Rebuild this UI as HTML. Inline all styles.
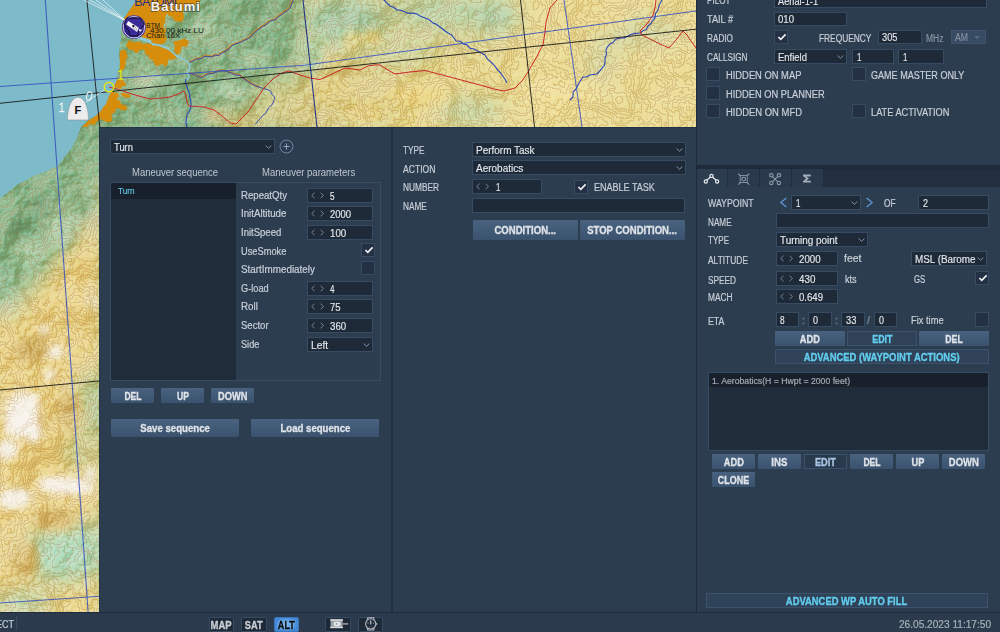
<!DOCTYPE html>
<html><head><meta charset="utf-8"><title>Mission Editor</title>
<style>
html,body{margin:0;padding:0;background:#2d3d50;}
body{width:1000px;height:632px;overflow:hidden;font-family:"Liberation Sans",sans-serif;}
#root{position:relative;width:1000px;height:632px;overflow:hidden;background:#2d3d50;}
#root div{position:absolute;box-sizing:border-box;white-space:nowrap;}
.f{display:inline-block;transform-origin:0 50%;}
.panel{background:#2d3d50;}
.t{font-size:10px;line-height:14px;color:#c8cfd7;-webkit-text-stroke:0.2px currentColor;}
.dim{color:#8793a1;}
.inp{background:#1f2a39;border:1px solid #374b62;}
.it{position:absolute;top:0.8px;bottom:-0.8px;font-size:10px;color:#e2e6ea;display:flex;align-items:center;-webkit-text-stroke:0.15px currentColor;}
.chev{position:absolute;right:2.5px;top:50%;margin-top:-1.6px;}
.spin{position:absolute;left:3px;top:50%;margin-top:-4px;}
.cb{background:#243144;border:1px solid #374b62;}
.ck{position:absolute;left:1.5px;top:2px;}
.btn{background:linear-gradient(#48627f,#3a526e);color:#dfe3e8;font-weight:bold;font-size:10px;text-align:center;border-radius:1px;}
.btn .f,.fbtn .f,.sb .f{transform-origin:50% 50%;-webkit-text-stroke:0.3px currentColor;}
.btn .f{position:relative;top:0.7px;}
.fbtn .f{position:relative;top:-0.2px;}
.fbtn{background:#2f4257;border:1px solid #3c536d;color:#62cdee;font-weight:bold;font-size:10px;text-align:center;}
.dark{background:#212c3a;}
.sel{background:#18202b;}
.sb{font-weight:bold;font-size:10px;text-align:center;line-height:13px;}
.sb .f{position:relative;top:0.9px;}
svg{display:block;}

</style></head>
<body>
<div id="root">
<svg id="map" style="position:absolute;left:0;top:0" width="697" height="613" viewBox="0 0 697 613">
<defs>
<filter id="b6" x="-30%" y="-30%" width="160%" height="160%"><feGaussianBlur stdDeviation="5"/></filter>
<filter id="b3" x="-30%" y="-30%" width="160%" height="160%"><feGaussianBlur stdDeviation="3"/></filter>
<filter id="b12" x="-30%" y="-30%" width="160%" height="160%"><feGaussianBlur stdDeviation="11"/></filter>
<filter id="hill" x="0" y="0" width="100%" height="100%" color-interpolation-filters="sRGB">
 <feTurbulence type="fractalNoise" baseFrequency="0.022" numOctaves="5" seed="8" result="n"/>
 <feDiffuseLighting in="n" surfaceScale="14" diffuseConstant="1.0" lighting-color="#ffffff"><feDistantLight azimuth="225" elevation="30"/></feDiffuseLighting>
</filter>
<filter id="cont" x="0" y="0" width="100%" height="100%" color-interpolation-filters="sRGB">
 <feTurbulence type="fractalNoise" baseFrequency="0.022" numOctaves="5" seed="8" result="n"/>
 <feColorMatrix in="n" type="matrix" values="0 0 0 0 0  0 0 0 0 0  0 0 0 0 0  0 0 0 1 0" result="a"/>
 <feComponentTransfer in="a" result="q"><feFuncA type="discrete" tableValues="0.0000 0.0667 0.1333 0.2000 0.2667 0.3333 0.4000 0.4667 0.5333 0.6000 0.6667 0.7333 0.8000 0.8667 0.9333 1.0000"/></feComponentTransfer>
 <feMorphology in="q" operator="dilate" radius="1" result="d"/>
 <feComposite in="d" in2="q" operator="arithmetic" k1="0" k2="1" k3="-1" k4="0" result="e"/>
 <feColorMatrix in="e" type="matrix" values="0 0 0 0 0.64  0 0 0 0 0.42  0 0 0 0 0.16  0 0 0 15 0" result="l"/>
 <feGaussianBlur in="l" stdDeviation="0.35"/>
</filter>
<linearGradient id="hg" x1="0" y1="0" x2="696" y2="0" gradientUnits="userSpaceOnUse"><stop offset="0" stop-color="#fff"/><stop offset="0.5" stop-color="#fff"/><stop offset="0.75" stop-color="#777"/><stop offset="1" stop-color="#666"/></linearGradient>
<mask id="hm" maskUnits="userSpaceOnUse" x="0" y="0" width="697" height="613"><rect x="0" y="0" width="697" height="613" fill="url(#hg)"/></mask>
<clipPath id="land"><path d="M137.0 0.0 L133.8 3.7 L131.0 8.0 L127.7 12.6 L124.0 18.0 L122.5 23.9 L121.0 30.0 L120.6 35.0 L121.0 40.0 L119.5 45.9 L119.0 52.0 L119.1 56.6 L120.0 62.0 L118.9 67.3 L118.0 72.0 L117.0 80.0 L113.0 88.0 L109.0 96.0 L106.0 104.0 L102.6 107.7 L100.0 112.0 L96.1 115.4 L92.0 118.0 L87.0 121.0 L81.0 127.0 L79.1 131.9 L77.5 136.5 L75.0 142.0 L71.9 147.3 L68.0 153.0 L64.3 157.0 L61.1 162.0 L58.0 166.0 L52.2 168.6 L47.0 171.0 L41.6 172.9 L36.0 175.0 L30.5 177.6 L25.0 181.0 L19.6 183.2 L15.0 186.0 L11.2 189.4 L7.0 193.0 L0.0 198.0 L0.0 613.0 L697.0 613.0 L697.0 0.0 Z"/></clipPath>
<clipPath id="vis"><path d="M0 0 H697 V127 H99 V613 H0 Z"/></clipPath>
</defs>
<g clip-path="url(#vis)">
<rect x="0" y="0" width="697" height="613" fill="#7dbbca"/>
<g clip-path="url(#land)">
<rect x="0" y="0" width="697" height="613" fill="#8cba90"/>
<g filter="url(#b12)">
<rect x="300" y="-30" width="450" height="200" fill="#dcd89c"/>
<rect x="390" y="50" width="370" height="120" fill="#e9dc96"/>
<rect x="500" y="-30" width="260" height="200" fill="#ecdf9c"/>
<ellipse cx="290" cy="105" rx="40" ry="30" fill="#d6d496"/>
<ellipse cx="238" cy="126" rx="22" ry="14" fill="#e6cf86"/>
<ellipse cx="350" cy="95" rx="45" ry="30" fill="#e2d692"/>
<ellipse cx="300" cy="118" rx="26" ry="14" fill="#dcd090"/>
<ellipse cx="345" cy="22" rx="40" ry="26" fill="#a9cfae"/>
<ellipse cx="440" cy="12" rx="50" ry="16" fill="#bcd8b0"/>
<ellipse cx="498" cy="16" rx="22" ry="16" fill="#b0d8bc"/>
<ellipse cx="470" cy="112" rx="34" ry="14" fill="#c8dab0"/>
<ellipse cx="405" cy="55" rx="30" ry="10" fill="#c9d8a8"/>
<ellipse cx="640" cy="32" rx="44" ry="14" fill="#d6dcae"/>
<ellipse cx="600" cy="62" rx="16" ry="22" fill="#d9dcaa"/>
<polygon points="110.0,180.0 110.0,640.0 -20.0,640.0 -20.0,300.0 30.0,290.0 60.0,250.0" fill="#ecd892"/>
<ellipse cx="4" cy="296" rx="18" ry="20" fill="#a4ccaa"/>
<ellipse cx="92" cy="405" rx="14" ry="36" fill="#b4cfa0"/>
<ellipse cx="64" cy="555" rx="42" ry="27" fill="#b4dec2"/>
<ellipse cx="88" cy="535" rx="14" ry="14" fill="#b4dec2"/>
<ellipse cx="22" cy="604" rx="30" ry="10" fill="#b4dec2"/>
<ellipse cx="80" cy="606" rx="28" ry="11" fill="#ecdc94"/>
<ellipse cx="80" cy="455" rx="12" ry="14" fill="#b8d0a0"/>
<ellipse cx="92" cy="212" rx="12" ry="28" fill="#cfd0a2"/>
</g>
<g filter="url(#b6)">
<ellipse cx="150" cy="80" rx="14" ry="8" fill="#b4d2ae"/>
<ellipse cx="205" cy="30" rx="16" ry="10" fill="#b0ceaa"/>
<ellipse cx="230" cy="90" rx="14" ry="9" fill="#b6d2ae"/>
<ellipse cx="165" cy="112" rx="16" ry="8" fill="#a4c8a2"/>
<ellipse cx="215" cy="115" rx="12" ry="7" fill="#cdc890"/>
<ellipse cx="255" cy="60" rx="14" ry="10" fill="#a6c8a0"/>
<ellipse cx="62" cy="225" rx="14" ry="26" fill="#b2d0ac"/>
<ellipse cx="30" cy="255" rx="16" ry="16" fill="#a8cca6"/>
<ellipse cx="40" cy="205" rx="12" ry="12" fill="#78a880"/>
<ellipse cx="20" cy="225" rx="10" ry="14" fill="#7aaa82"/>
<ellipse cx="85" cy="200" rx="10" ry="20" fill="#9cc49c"/>
<ellipse cx="22" cy="415" rx="17" ry="24" fill="#f6f1e8"/>
<ellipse cx="34" cy="432" rx="8" ry="10" fill="#f6f1e8"/>
<ellipse cx="66" cy="485" rx="28" ry="8" fill="#f5efe4"/>
<ellipse cx="14" cy="498" rx="16" ry="11" fill="#f3ebd8"/>
<ellipse cx="8" cy="450" rx="10" ry="10" fill="#f3ebd8"/>
<ellipse cx="56" cy="352" rx="8" ry="6" fill="#f3ecd6"/>
<ellipse cx="44" cy="330" rx="5" ry="5" fill="#f3ecd6"/>
<ellipse cx="50" cy="375" rx="6" ry="5" fill="#f3ecd6"/>
<ellipse cx="92" cy="300" rx="6" ry="10" fill="#efe6cc"/>
<ellipse cx="55" cy="520" rx="22" ry="10" fill="#dcc076"/>
<ellipse cx="30" cy="350" rx="18" ry="12" fill="#dabf76"/>
<ellipse cx="70" cy="410" rx="12" ry="18" fill="#dcc27a"/>
<ellipse cx="25" cy="560" rx="14" ry="20" fill="#e0c880"/>
<ellipse cx="420" cy="95" rx="30" ry="10" fill="#ecd98c"/>
<ellipse cx="365" cy="112" rx="20" ry="10" fill="#e8d68a"/>
<ellipse cx="560" cy="95" rx="40" ry="18" fill="#f0e2a0"/>
<ellipse cx="600" cy="18" rx="30" ry="10" fill="#ecdc9a"/>
<ellipse cx="310" cy="55" rx="12" ry="18" fill="#b4d2a8"/>
<ellipse cx="330" cy="90" rx="16" ry="10" fill="#e4d48c"/>
<ellipse cx="372" cy="38" rx="10" ry="8" fill="#ead98e"/>
<ellipse cx="352" cy="42" rx="10" ry="12" fill="#e6dc9c"/>
<ellipse cx="336" cy="62" rx="10" ry="6" fill="#e4d894"/>
</g>
<g mask="url(#hm)" style="mix-blend-mode:soft-light"><rect x="0" y="0" width="697" height="613" filter="url(#hill)" opacity="0.5"/></g>
<rect x="0" y="0" width="697" height="613" filter="url(#cont)" opacity="0.24"/>
<g filter="url(#b3)" opacity="0.8">
<ellipse cx="22" cy="414" rx="9" ry="25" fill="#f8f4ec" transform="rotate(38 22 414)"/>
<ellipse cx="33" cy="433" rx="6" ry="8" fill="#f8f4ec" transform="rotate(0 33 433)"/>
<ellipse cx="66" cy="486" rx="28" ry="6" fill="#f8f4ec" transform="rotate(8 66 486)"/>
<ellipse cx="14" cy="499" rx="15" ry="8" fill="#f8f4ec" transform="rotate(-15 14 499)"/>
<ellipse cx="7" cy="449" rx="8" ry="8" fill="#f8f4ec" transform="rotate(0 7 449)"/>
<ellipse cx="56" cy="352" rx="7" ry="4.5" fill="#f8f4ec" transform="rotate(-20 56 352)"/>
<ellipse cx="44" cy="330" rx="4" ry="4" fill="#f8f4ec" transform="rotate(0 44 330)"/>
<ellipse cx="50" cy="375" rx="5" ry="4" fill="#f8f4ec" transform="rotate(0 50 375)"/>
<ellipse cx="90" cy="474" rx="5" ry="8" fill="#f8f4ec" transform="rotate(0 90 474)"/>
</g>
<polygon points="137.0,0.0 200.0,0.0 199.0,4.0 192.0,4.5 186.0,5.0 184.0,9.0 183.0,12.0 184.0,17.0 183.0,21.0 179.0,22.0 175.0,21.0 172.0,17.0 169.0,16.0 167.0,13.0 165.5,17.0 165.0,22.0 163.0,26.0 166.0,30.0 165.0,35.0 167.0,40.0 164.0,43.0 162.0,44.5 155.0,43.5 148.0,40.5 141.0,37.5 136.0,36.0 128.0,34.0 122.0,30.0 124.0,18.0 131.0,8.0" fill="#d68d0c"/>
<polygon points="125.9,45.7 128.9,40.3 134.0,42.5 139.7,41.5 143.3,43.9 150.5,43.3 154.1,46.3 156.5,45.1 162.5,48.1 170.9,50.5 174.5,52.9 177.0,57.7 172.1,60.1 168.5,58.9 167.3,64.9 164.9,67.3 162.5,63.7 157.7,66.1 154.7,64.9 152.9,60.1 149.3,58.9 148.1,55.3 145.7,54.7 144.5,50.5 140.9,49.3 137.3,52.9 134.9,52.9 133.7,50.5 128.9,49.3" fill="#d68d0c"/>
<polygon points="174.5,40.9 179.0,40.5 184.2,38.5 189.0,41.5 186.6,46.9 181.8,46.3 180.0,52.9 177.0,54.7 173.9,50.5 175.1,45.7 173.3,43.3" fill="#d68d0c"/>
<polygon points="123.4,49.3 125.9,50.5 127.7,56.5 125.9,60.1 125.2,67.3 122.2,71.0 120.0,70.0 119.5,60.0 120.0,52.0" fill="#d68d0c"/>
<polygon points="116.0,80.0 118.0,78.5 121.0,80.5 123.0,79.5 124.0,82.0 126.0,83.0 125.5,86.0 122.0,86.5 120.0,89.0 117.0,87.5 115.0,88.0 114.0,84.0" fill="#d68d0c"/>
<polygon points="109.4,91.8 113.0,92.0 118.0,93.0 119.0,97.0 116.0,99.0 120.0,101.0 121.0,104.0 127.0,106.0 126.5,110.0 121.0,110.5 119.0,108.0 116.0,109.0 114.0,113.0 111.5,114.0 112.0,121.0 108.0,122.5 104.0,121.0 101.0,119.0 96.0,122.0 95.0,125.0 90.0,124.0 87.0,127.0 82.0,127.0 88.0,121.0 94.0,117.0 100.0,112.0 105.0,104.0 108.0,96.0" fill="#d68d0c"/>
<polygon points="121.0,93.0 126.0,93.5 130.6,95.0 130.0,97.6 125.0,97.4 122.0,96.0" fill="#d68d0c"/>
<path d="M128.0 35.0 L140.0 38.5 L148.0 41.5 L154.0 44.5 L160.0 45.5 L167.0 48.0 L172.0 52.0 L177.0 56.5 L184.0 59.5 L189.0 62.5 L190.0 68.0 L188.0 73.0 L189.0 77.0 L187.0 80.0" fill="none" stroke="#8ecbdc" stroke-width="1.4" stroke-linejoin="round"/>
<path d="M128.0 35.0 L140.0 38.0 L150.0 41.0" fill="none" stroke="#8ecbdc" stroke-width="2.8" stroke-linecap="round"/>
</g>
<path d="M189.0 62.0 L192.3 60.7 L196.4 58.5 L201.0 58.0 L204.0 56.0 L206.9 55.9 L211.1 56.4 L215.1 54.7 L218.0 55.0 L223.2 51.5 L226.0 50.0 L228.8 48.1 L232.0 45.0 L235.1 43.5 L240.0 42.0 L242.8 40.4 L248.0 38.0 L251.7 35.2 L254.0 32.0 L258.9 28.5 L262.0 26.0 L265.5 24.2 L268.0 22.0 L271.5 19.9 L275.5 19.1 L278.0 16.0 L280.9 14.4 L282.9 12.5 L287.0 10.0 L289.4 8.2 L291.0 4.0 L293.0 0.0" fill="none" stroke="#c8822a" stroke-width="1.8" stroke-linejoin="round" opacity="0.9"/>
<path d="M189.4 62.5 L192.7 61.2 L196.8 59.0 L201.4 58.5 L204.4 56.5 L207.3 56.4 L211.5 56.9 L215.5 55.2 L218.4 55.5 L223.6 52.0 L226.4 50.5 L229.2 48.6 L232.4 45.5 L235.5 44.0 L240.4 42.5 L243.2 40.9 L248.4 38.5 L252.1 35.7 L254.4 32.5 L259.3 29.0 L262.4 26.5 L265.9 24.7 L268.4 22.5 L271.9 20.4 L275.9 19.6 L278.4 16.5 L281.3 14.9 L283.3 13.0 L287.4 10.5 L289.8 8.7 L291.4 4.5 L293.4 0.5" fill="none" stroke="#2b46b8" stroke-width="0.9" stroke-linejoin="round" opacity="1"/>
<path d="M189.0 73.0 L194.1 73.8 L197.4 76.1 L202.0 77.0 L204.1 75.6 L207.8 73.4 L212.0 73.0 L214.9 72.2 L220.0 70.0 L224.1 70.4 L230.0 72.0 L234.7 74.4 L240.0 75.0 L243.0 77.9 L248.0 81.0 L252.1 84.0 L256.8 85.9 L260.0 87.0" fill="none" stroke="#c8822a" stroke-width="1.8" stroke-linejoin="round" opacity="0.9"/>
<path d="M189.3 73.5 L194.4 74.3 L197.7 76.6 L202.3 77.5 L204.4 76.1 L208.1 73.9 L212.3 73.5 L215.2 72.7 L220.3 70.5 L224.4 70.9 L230.3 72.5 L235.0 74.9 L240.3 75.5 L243.3 78.4 L248.3 81.5 L252.4 84.5 L257.1 86.4 L260.3 87.5 L264.7 88.8 L270.3 90.5 L271.9 94.5 L274.3 96.5 L274.4 99.6 L272.3 104.5 L268.5 107.8 L266.3 112.5 L262.6 115.5 L260.3 118.5 L258.0 120.9 L255.3 124.5" fill="none" stroke="#2b46b8" stroke-width="0.9" stroke-linejoin="round" opacity="1"/>
<path d="M186.0 79.0 L185.4 82.5 L187.0 86.5 L188.0 90.0 L189.9 94.0 L189.5 97.3 L190.7 99.3 L191.0 104.0 L190.7 108.1 L189.3 111.4 L187.0 114.0 L186.7 117.0 L186.0 120.8 L185.9 122.6 L187.0 127.0" fill="none" stroke="#2b46b8" stroke-width="1.1" stroke-linejoin="round" opacity="1"/>
<path d="M384.0 0.0 L386.4 2.3 L390.0 6.0 L393.1 7.0 L397.0 10.0 L399.7 10.0 L403.6 11.2 L407.2 13.1 L412.0 13.0 L416.6 13.9 L420.1 16.0 L425.0 18.0 L428.4 19.2 L433.1 23.1 L436.0 24.0 L438.9 26.3 L441.1 27.8 L445.0 31.0 L447.7 32.8 L451.7 34.9 L454.0 38.0 L456.0 41.0 L460.1 41.2 L463.0 44.0 L466.8 44.6 L470.4 48.4 L474.0 49.0 L478.5 51.4 L480.8 52.7 L485.0 55.0 L486.9 58.6 L490.4 61.6 L493.0 64.0 L494.9 66.1 L498.2 70.6 L500.5 72.9 L502.0 75.0 L505.2 79.5 L507.0 83.0" fill="none" stroke="#2b46b8" stroke-width="1.1" stroke-linejoin="round" opacity="1"/>
<path d="M662.0 0.0 L660.1 3.4 L659.0 5.6 L658.0 10.0 L655.5 13.5 L655.0 18.0 L652.1 21.1 L651.3 23.2 L648.0 26.0 L646.3 29.4 L643.7 30.4 L640.0 33.0 L635.4 33.4 L631.3 34.3 L628.0 36.0 L624.3 37.9 L620.7 38.0 L616.0 39.0 L613.3 42.2 L610.0 44.0 L607.1 47.4 L606.0 50.0 L606.4 54.6 L605.0 58.0 L605.1 62.0 L604.0 66.0 L601.0 69.3 L599.0 72.0 L597.0 74.0 L594.5 74.3 L590.0 75.0 L586.3 77.0 L583.0 77.0 L581.5 79.3 L579.0 83.0 L576.0 89.0 L573.2 91.9 L572.9 97.0 L570.0 100.0" fill="none" stroke="#2b46b8" stroke-width="1.1" stroke-linejoin="round" opacity="1"/>
<path d="M109.0 87.0 L120.0 90.0 L135.0 95.0 L150.0 99.0 L162.0 98.0 L170.0 97.0 L178.0 94.0 L184.0 91.0 L186.0 96.0 L187.0 102.0 L189.0 106.0 L204.0 107.0 L214.0 110.0 L222.0 116.0 L230.0 123.0 L236.0 124.0 L242.0 118.0 L248.0 112.0 L256.0 100.0 L264.0 88.0 L274.0 78.0 L282.0 73.0 L289.0 71.0 L300.0 75.0 L310.0 78.0 L320.0 79.5 L332.0 74.0 L345.0 68.0 L353.0 69.0 L360.0 70.0 L368.0 66.0 L375.0 65.0 L380.0 65.0 L388.0 70.0 L395.0 74.0 L410.0 72.0 L425.0 70.5 L450.0 77.0 L480.0 85.0 L494.0 89.0 L504.0 91.0 L515.0 88.0 L522.0 81.0 L528.0 72.0 L536.0 58.0 L543.0 45.0 L545.0 32.0 L546.0 22.0 L550.0 8.0 L557.0 0.0" fill="none" stroke="#cc2a2a" stroke-width="1" stroke-linejoin="round" opacity="1"/>
<path d="M656.0 0.0 L655.0 8.0 L653.0 15.0 L647.0 24.0 L640.0 31.0 L642.0 35.0 L650.0 39.0 L660.0 44.0 L669.0 48.0 L676.0 40.0 L683.0 31.0 L687.0 35.0 L691.0 41.0 L696.0 48.0" fill="none" stroke="#cc2a2a" stroke-width="1" stroke-linejoin="round" opacity="1"/>
<path d="M0.0 103.3 L696.0 29.2" fill="none" stroke="#1a1a1a" stroke-width="1" stroke-linejoin="round" opacity="0.9"/>
<path d="M86.9 0.0 L99.8 127.0" fill="none" stroke="#1a1a1a" stroke-width="1" stroke-linejoin="round" opacity="0.9"/>
<path d="M520.5 0.0 L534.5 127.0" fill="none" stroke="#1a1a1a" stroke-width="1" stroke-linejoin="round" opacity="0.9"/>
<path d="M0.0 390.0 L99.0 381.0" fill="none" stroke="#1a1a1a" stroke-width="1" stroke-linejoin="round" opacity="0.9"/>
<path d="M0.0 86.5 L305.0 65.2 L697.0 10.8" fill="none" stroke="#3450c0" stroke-width="1.0" stroke-linejoin="round" opacity="0.85"/>
<path d="M45.3 0.0 L88.2 613.0" fill="none" stroke="#3450c0" stroke-width="1.1" stroke-linejoin="round" opacity="0.85"/>
<path d="M303.0 0.0 L317.0 127.0" fill="none" stroke="#1e2d80" stroke-width="1.1" stroke-linejoin="round" opacity="0.95"/>
<path d="M564.0 0.0 L582.0 127.0" fill="none" stroke="#3450c0" stroke-width="1.0" stroke-linejoin="round" opacity="0.85"/>
<path d="M0.0 603.0 L99.0 596.3" fill="none" stroke="#3450c0" stroke-width="1.0" stroke-linejoin="round" opacity="0.85"/>
<path d="M84.0 0.0 L126.0 21.0" fill="none" stroke="#ffffff" stroke-width="0.7" stroke-linejoin="round" opacity="0.9"/>
<path d="M90.0 0.0 L126.0 21.0" fill="none" stroke="#ffffff" stroke-width="0.7" stroke-linejoin="round" opacity="0.9"/>
<path d="M96.0 0.0 L126.0 21.0" fill="none" stroke="#ffffff" stroke-width="0.7" stroke-linejoin="round" opacity="0.9"/>
<path d="M103.0 0.0 L126.0 21.0" fill="none" stroke="#ffffff" stroke-width="0.7" stroke-linejoin="round" opacity="0.9"/>
<g>
<circle cx="133.9" cy="27.2" r="11.9" fill="#4436a0"/>
<circle cx="133.9" cy="27.2" r="10.7" fill="#2f2286" stroke="#e4e1f2" stroke-width="0.9"/>
<path d="M123.9 24 L126.8 18.2 L140.3 17.9 L144.4 24 L138.4 31.8 L138 36 L130 36 L129 31 Z" fill="#3a2b96" stroke="#0c0a20" stroke-width="0.9" stroke-linejoin="round"/>
<path d="M128.2 21 L126.3 24.6 L137 32 L138.9 27.7 Z" fill="#f6f6fa"/>
<path d="M134.6 25.6 L133 29.2 M136 26.4 L134.4 30 M137.4 27.2 L135.8 30.9" stroke="#9a98b0" stroke-width="0.7"/>
<circle cx="133.3" cy="26.1" r="1.15" fill="#0a0a14"/>
<circle cx="140.2" cy="30.3" r="1.3" fill="#d9d7e6"/>
<path d="M139 33.5 L143.5 27" stroke="#cfcce0" stroke-width="0.8" stroke-dasharray="0.8 0.8"/>
</g>
<text x="134.3" y="6" font-family="Liberation Sans, sans-serif" font-size="12.5" fill="#2b2f86" textLength="43" lengthAdjust="spacing">BATUMI</text>
<text x="150.8" y="11.3" font-family="Liberation Sans, sans-serif" font-size="13" font-weight="bold" fill="#1c1c1c" stroke="#2a2a2a" stroke-width="1.8" opacity="0.5" textLength="49" lengthAdjust="spacing">Batumi</text>
<text x="150.8" y="11.3" font-family="Liberation Sans, sans-serif" font-size="13" font-weight="bold" fill="#f4f4f4" textLength="49" lengthAdjust="spacing">Batumi</text>
<text x="146.3" y="27.7" font-family="Liberation Sans, sans-serif" font-size="7.6" fill="#151515" textLength="13.7" lengthAdjust="spacingAndGlyphs">BTM</text>
<text x="150" y="33" font-family="Liberation Sans, sans-serif" font-size="7.6" fill="#151515" textLength="54" lengthAdjust="spacingAndGlyphs">430.00 kHz LU</text>
<text x="146.3" y="37.6" font-family="Liberation Sans, sans-serif" font-size="7.6" fill="#151515" textLength="33.7" lengthAdjust="spacingAndGlyphs">Chan 16X</text>
<path d="M85.5 102.4 L104.5 89.8" fill="none" stroke="#f0f0f0" stroke-width="0.8" stroke-linejoin="round" opacity="0.9"/>
<circle cx="109" cy="87.1" r="4.7" fill="none" stroke="#e6e612" stroke-width="1.5"/>
<path d="M118.2 72 L120.9 70.2 V78.6 M118 79 H123.4" fill="none" stroke="#e6e612" stroke-width="1.25"/>
<ellipse cx="89.2" cy="96" rx="2.5" ry="4.3" fill="none" stroke="#f2f2f2" stroke-width="1.05" transform="rotate(17 89.2 96)"/>
<path d="M59.6 104.8 L62 103.2 V111.2 M59.4 111.6 H64.4" fill="none" stroke="#f2f2f2" stroke-width="1.2"/>
<path d="M67.5 120 V117.5 C68 107.5 71.5 97.2 78 97.2 C84.5 97.2 88 107.5 88.4 117.5 V120 Z" fill="#ececec" stroke="#8a8a8a" stroke-width="0.5"/>
<text x="74.5" y="114.2" font-family="Liberation Sans, sans-serif" font-size="11.2" font-weight="bold" fill="#111">F</text>
</g>
</svg>
<div class="panel" style="left:99px;top:127px;width:293px;height:485px;border-left:1px solid #243246;border-top:1px solid #243246;"></div>
<div class="panel" style="left:391px;top:127px;width:305px;height:485px;border-left:2px solid #222f42;border-top:1px solid #243246;"></div>
<div class="panel" style="left:696px;top:0px;width:304px;height:612px;border-left:1px solid #1f2b3d;"></div>
<div class="inp" style="left:110px;top:139px;width:165px;height:15px;"><span class="it" style="left:3px;"><span class="f" style="transform:scaleX(0.940);">Turn</span></span><svg class="chev" width="7" height="4" viewBox="0 0 7 4"><path d="M0.6 0.5 L3.5 3.3 L6.4 0.5" fill="none" stroke="#8fa1b5" stroke-width="0.9"/></svg></div>
<svg style="position:absolute;left:279px;top:139px" width="15" height="15" viewBox="0 0 15 15"><circle cx="7.5" cy="7.5" r="6.5" fill="none" stroke="#6d86a3" stroke-width="1"/><path d="M4.5 7.5 H10.5 M7.5 4.5 V10.5" stroke="#8fa6bf" stroke-width="1" fill="none"/></svg>
<div class="t" style="left:131.6px;top:166.3px;color:#bfc7cf;-webkit-text-stroke:0;"><span class="f" style="transform:scaleX(0.949);">Maneuver sequence</span></div>
<div class="t" style="left:261.8px;top:166.3px;color:#bfc7cf;-webkit-text-stroke:0;"><span class="f" style="transform:scaleX(0.953);">Maneuver parameters</span></div>
<div class="" style="left:110px;top:182px;width:271px;height:199px;border:1px solid #374b62;"></div>
<div class="dark" style="left:111px;top:183px;width:125px;height:197px;"></div>
<div class="sel" style="left:111px;top:183px;width:125px;height:16px;"></div>
<div class="t" style="left:118.4px;top:183.8px;font-size:9px;color:#5fc3e0;"><span class="f" style="transform:scaleX(0.913);">Turn</span></div>
<div class="t" style="left:240.5px;top:189.0px;"><span class="f" style="transform:scaleX(0.962);">RepeatQty</span></div>
<div class="inp" style="left:307px;top:188px;width:66px;height:15px;"><svg class="spin" width="14" height="7" viewBox="0 0 14 7"><path d="M3.6 0.8 L0.7 3.5 L3.6 6.2 M9.6 0.8 L12.5 3.5 L9.6 6.2" fill="none" stroke="#7d8da0" stroke-width="0.9"/></svg><span class="it" style="left:22.4px"><span class="f" style="transform:scaleX(0.809);">5</span></span></div>
<div class="t" style="left:240.5px;top:207.0px;"><span class="f" style="transform:scaleX(0.972);">InitAltitude</span></div>
<div class="inp" style="left:307px;top:206px;width:66px;height:15px;"><svg class="spin" width="14" height="7" viewBox="0 0 14 7"><path d="M3.6 0.8 L0.7 3.5 L3.6 6.2 M9.6 0.8 L12.5 3.5 L9.6 6.2" fill="none" stroke="#7d8da0" stroke-width="0.9"/></svg><span class="it" style="left:22.4px"><span class="f" style="transform:scaleX(0.944);">2000</span></span></div>
<div class="t" style="left:240.5px;top:226.0px;"><span class="f" style="transform:scaleX(0.953);">InitSpeed</span></div>
<div class="inp" style="left:307px;top:225px;width:66px;height:15px;"><svg class="spin" width="14" height="7" viewBox="0 0 14 7"><path d="M3.6 0.8 L0.7 3.5 L3.6 6.2 M9.6 0.8 L12.5 3.5 L9.6 6.2" fill="none" stroke="#7d8da0" stroke-width="0.9"/></svg><span class="it" style="left:22.4px"><span class="f" style="transform:scaleX(0.971);">100</span></span></div>
<div class="t" style="left:240.5px;top:245.0px;"><span class="f" style="transform:scaleX(0.928);">UseSmoke</span></div>
<div class="cb" style="left:361px;top:243px;width:14px;height:14px;"><svg class="ck" width="10" height="8" viewBox="0 0 10 8"><path d="M1.4 4 L3.8 6.4 L8.6 1.4" fill="none" stroke="#f2f4f6" stroke-width="1.6"/></svg></div>
<div class="t" style="left:240.5px;top:263.0px;"><span class="f" style="transform:scaleX(0.985);">StartImmediately</span></div>
<div class="cb" style="left:361px;top:261px;width:14px;height:14px;"></div>
<div class="t" style="left:240.5px;top:282.0px;"><span class="f" style="transform:scaleX(0.920);">G-load</span></div>
<div class="inp" style="left:307px;top:281px;width:66px;height:15px;"><svg class="spin" width="14" height="7" viewBox="0 0 14 7"><path d="M3.6 0.8 L0.7 3.5 L3.6 6.2 M9.6 0.8 L12.5 3.5 L9.6 6.2" fill="none" stroke="#7d8da0" stroke-width="0.9"/></svg><span class="it" style="left:22.4px"><span class="f" style="transform:scaleX(0.809);">4</span></span></div>
<div class="t" style="left:240.5px;top:300.0px;"><span class="f" style="transform:scaleX(0.975);">Roll</span></div>
<div class="inp" style="left:307px;top:299px;width:66px;height:15px;"><svg class="spin" width="14" height="7" viewBox="0 0 14 7"><path d="M3.6 0.8 L0.7 3.5 L3.6 6.2 M9.6 0.8 L12.5 3.5 L9.6 6.2" fill="none" stroke="#7d8da0" stroke-width="0.9"/></svg><span class="it" style="left:22.4px"><span class="f" style="transform:scaleX(0.953);">75</span></span></div>
<div class="t" style="left:240.5px;top:319.0px;"><span class="f" style="transform:scaleX(0.955);">Sector</span></div>
<div class="inp" style="left:307px;top:318px;width:66px;height:15px;"><svg class="spin" width="14" height="7" viewBox="0 0 14 7"><path d="M3.6 0.8 L0.7 3.5 L3.6 6.2 M9.6 0.8 L12.5 3.5 L9.6 6.2" fill="none" stroke="#7d8da0" stroke-width="0.9"/></svg><span class="it" style="left:22.4px"><span class="f" style="transform:scaleX(0.971);">360</span></span></div>
<div class="t" style="left:240.5px;top:338.0px;"><span class="f" style="transform:scaleX(0.914);">Side</span></div>
<div class="inp" style="left:307px;top:337px;width:66px;height:15px;"><span class="it" style="left:3px;"><span class="f" style="transform:scaleX(1.031);">Left</span></span><svg class="chev" width="7" height="4" viewBox="0 0 7 4"><path d="M0.6 0.5 L3.5 3.3 L6.4 0.5" fill="none" stroke="#8fa1b5" stroke-width="0.9"/></svg></div>
<div class="btn" style="left:111px;top:388px;width:43px;height:15px;line-height:15px;"><span class="f" style="transform:scaleX(0.855);">DEL</span></div>
<div class="btn" style="left:161px;top:388px;width:43px;height:15px;line-height:15px;"><span class="f" style="transform:scaleX(0.863);">UP</span></div>
<div class="btn" style="left:211px;top:388px;width:43px;height:15px;line-height:15px;"><span class="f" style="transform:scaleX(0.931);">DOWN</span></div>
<div class="btn" style="left:111px;top:419px;width:128px;height:18px;line-height:18px;"><span class="f" style="transform:scaleX(0.964);">Save sequence</span></div>
<div class="btn" style="left:251px;top:419px;width:128px;height:18px;line-height:18px;"><span class="f" style="transform:scaleX(0.961);">Load sequence</span></div>
<div class="t" style="left:402.6px;top:143.8px;"><span class="f" style="transform:scaleX(0.819);">TYPE</span></div>
<div class="inp" style="left:472px;top:142px;width:214px;height:15px;"><span class="it" style="left:3px;"><span class="f" style="transform:scaleX(0.998);">Perform Task</span></span><svg class="chev" width="7" height="4" viewBox="0 0 7 4"><path d="M0.6 0.5 L3.5 3.3 L6.4 0.5" fill="none" stroke="#8fa1b5" stroke-width="0.9"/></svg></div>
<div class="t" style="left:402.6px;top:162.8px;"><span class="f" style="transform:scaleX(0.858);">ACTION</span></div>
<div class="inp" style="left:472px;top:160px;width:214px;height:15px;"><span class="it" style="left:3px;"><span class="f" style="transform:scaleX(0.999);">Aerobatics</span></span><svg class="chev" width="7" height="4" viewBox="0 0 7 4"><path d="M0.6 0.5 L3.5 3.3 L6.4 0.5" fill="none" stroke="#8fa1b5" stroke-width="0.9"/></svg></div>
<div class="t" style="left:402.6px;top:180.8px;"><span class="f" style="transform:scaleX(0.831);">NUMBER</span></div>
<div class="inp" style="left:472px;top:179px;width:70px;height:15px;"><svg class="spin" width="14" height="7" viewBox="0 0 14 7"><path d="M3.6 0.8 L0.7 3.5 L3.6 6.2 M9.6 0.8 L12.5 3.5 L9.6 6.2" fill="none" stroke="#7d8da0" stroke-width="0.9"/></svg><span class="it" style="left:22.6px"><span class="f" style="transform:scaleX(0.791);">1</span></span></div>
<div class="cb" style="left:574px;top:180px;width:14px;height:14px;"><svg class="ck" width="10" height="8" viewBox="0 0 10 8"><path d="M1.4 4 L3.8 6.4 L8.6 1.4" fill="none" stroke="#f2f4f6" stroke-width="1.6"/></svg></div>
<div class="t" style="left:593.6px;top:180.8px;"><span class="f" style="transform:scaleX(0.902);">ENABLE TASK</span></div>
<div class="t" style="left:402.6px;top:199.8px;"><span class="f" style="transform:scaleX(0.823);">NAME</span></div>
<div class="inp" style="left:472px;top:198px;width:213px;height:15px;"><span class="it" style="left:3px;"><span class="f" style=""></span></span></div>
<div class="btn" style="left:473px;top:220px;width:105px;height:20px;line-height:20px;"><span class="f" style="transform:scaleX(0.956);">CONDITION...</span></div>
<div class="btn" style="left:580px;top:220px;width:105px;height:20px;line-height:20px;"><span class="f" style="transform:scaleX(0.954);">STOP CONDITION...</span></div>
<div class="t" style="left:706.6px;top:-6.2px;"><span class="f" style="transform:scaleX(0.810);">PILOT</span></div>
<div class="inp" style="left:774px;top:-7px;width:213px;height:15px;"><span class="it" style="left:3px;"><span class="f" style="transform:scaleX(0.923);">Aerial-1-1</span></span></div>
<div class="t" style="left:706.6px;top:12.8px;"><span class="f" style="transform:scaleX(0.917);">TAIL #</span></div>
<div class="inp" style="left:774px;top:12px;width:73px;height:14px;"><span class="it" style="left:3px;"><span class="f" style="transform:scaleX(0.959);">010</span></span></div>
<div class="t" style="left:706.6px;top:31.8px;"><span class="f" style="transform:scaleX(0.821);">RADIO</span></div>
<div class="cb" style="left:774px;top:30px;width:14px;height:14px;"><svg class="ck" width="10" height="8" viewBox="0 0 10 8"><path d="M1.4 4 L3.8 6.4 L8.6 1.4" fill="none" stroke="#f2f4f6" stroke-width="1.6"/></svg></div>
<div class="t" style="left:818.6px;top:31.8px;"><span class="f" style="transform:scaleX(0.834);">FREQUENCY</span></div>
<div class="inp" style="left:878px;top:30px;width:44px;height:14px;"><span class="it" style="left:3px;"><span class="f" style="transform:scaleX(0.923);">305</span></span></div>
<div class="t dim" style="left:925.6px;top:31.8px;"><span class="f" style="transform:scaleX(0.846);">MHz</span></div>
<div class="inp" style="left:951px;top:30px;width:35px;height:14px;background:#374b62;border-color:#3d536b;"><span class="it" style="left:3px;color:#8793a1"><span class="f" style="transform:scaleX(0.867);">AM</span></span><svg class="chev" width="6" height="3" viewBox="0 0 6 3" style="right:5px;margin-top:-1px"><path d="M0 0 H6 L3 3 Z" fill="#566a80"/></svg></div>
<div class="t" style="left:706.6px;top:50.8px;"><span class="f" style="transform:scaleX(0.817);">CALLSIGN</span></div>
<div class="inp" style="left:774px;top:49px;width:73px;height:15px;"><span class="it" style="left:2.6px;"><span class="f" style="transform:scaleX(0.948);">Enfield</span></span><svg class="chev" width="7" height="4" viewBox="0 0 7 4"><path d="M0.6 0.5 L3.5 3.3 L6.4 0.5" fill="none" stroke="#8fa1b5" stroke-width="0.9"/></svg></div>
<div class="inp" style="left:852px;top:49px;width:42px;height:15px;"><span class="it" style="left:3.5999999999999996px;"><span class="f" style="transform:scaleX(0.791);">1</span></span></div>
<div class="inp" style="left:898px;top:49px;width:46px;height:15px;"><span class="it" style="left:4px;"><span class="f" style="transform:scaleX(0.791);">1</span></span></div>
<div class="cb" style="left:706px;top:67px;width:14px;height:14px;"></div>
<div class="t" style="left:726px;top:68.8px;"><span class="f" style="transform:scaleX(0.936);">HIDDEN ON MAP</span></div>
<div class="cb" style="left:852px;top:67px;width:14px;height:14px;"></div>
<div class="t" style="left:870.6px;top:68.8px;"><span class="f" style="transform:scaleX(0.905);">GAME MASTER ONLY</span></div>
<div class="cb" style="left:706px;top:86px;width:14px;height:14px;"></div>
<div class="t" style="left:726px;top:87.8px;"><span class="f" style="transform:scaleX(0.929);">HIDDEN ON PLANNER</span></div>
<div class="cb" style="left:706px;top:104px;width:14px;height:14px;"></div>
<div class="t" style="left:726px;top:105.8px;"><span class="f" style="transform:scaleX(0.943);">HIDDEN ON MFD</span></div>
<div class="cb" style="left:852px;top:104px;width:14px;height:14px;"></div>
<div class="t" style="left:870.6px;top:105.8px;"><span class="f" style="transform:scaleX(0.922);">LATE ACTIVATION</span></div>
<div class="" style="left:697px;top:165px;width:303px;height:22px;background:#222f3f;"></div>
<div class="" style="left:697px;top:165px;width:303px;height:4px;background:#1f2b3a;"></div>
<div class="panel" style="left:697px;top:169px;width:30px;height:18px;"></div>
<div class="" style="left:728px;top:169px;width:31px;height:18px;background:#2a394b;"></div>
<div class="" style="left:760px;top:169px;width:31px;height:18px;background:#2a394b;"></div>
<div class="" style="left:792px;top:169px;width:31px;height:18px;background:#2a394b;"></div>
<svg style="position:absolute;left:697px;top:169px" width="127" height="18" viewBox="697 169 127 18">
<g fill="none" stroke="#e6eaee" stroke-width="1.2">
<path d="M706.6 180.3 L710.6 177 M712.4 177 L716.3 180.3"/>
<circle cx="705.8" cy="181.5" r="1.6"/><circle cx="717.1" cy="181.5" r="1.6"/><circle cx="711.5" cy="175.9" r="1.6"/>
</g>
<g fill="none" stroke="#8d9baa" stroke-width="1.1">
<rect x="740.2" y="175.6" width="7" height="7" stroke-width="0.9"/>
<path d="M738.2 173.6 L740.4 175.8 M749.2 173.6 L747 175.8 M738.2 184.6 L740.4 182.4 M749.2 184.6 L747 182.4"/>
<circle cx="743.7" cy="179.1" r="1.9"/>
</g>
<g fill="none" stroke="#8d9baa" stroke-width="1.1">
<circle cx="771.3" cy="175.3" r="1.7"/><circle cx="778.9" cy="175.3" r="1.7"/><circle cx="771.3" cy="182.9" r="1.7"/><circle cx="778.9" cy="182.9" r="1.7"/>
<path d="M772.6 176.6 L777.6 181.6 M777.6 176.6 L772.6 181.6"/>
</g>
<path d="M803 174.6 H810.8 V176.4 H806.2 L809 178.6 L806.2 180.8 H810.8 V182.6 H803 V181.2 L806.2 178.6 L803 176 Z" fill="#a3aebb"/>
</svg>
<div class="t" style="left:708px;top:196.8px;"><span class="f" style="transform:scaleX(0.873);">WAYPOINT</span></div>
<svg style="position:absolute;left:779px;top:197px" width="9" height="11" viewBox="0 0 9 11"><path d="M7.4 1 L1.8 5.5 L7.4 10" fill="none" stroke="#5f98d6" stroke-width="1.25"/></svg>
<div class="inp" style="left:791px;top:195px;width:70px;height:15px;"><span class="it" style="left:3.5999999999999996px;"><span class="f" style="transform:scaleX(0.791);">1</span></span><svg class="chev" width="7" height="4" viewBox="0 0 7 4"><path d="M0.6 0.5 L3.5 3.3 L6.4 0.5" fill="none" stroke="#8fa1b5" stroke-width="0.9"/></svg></div>
<svg style="position:absolute;left:865px;top:197px" width="9" height="11" viewBox="0 0 9 11"><path d="M1.6 1 L7.2 5.5 L1.6 10" fill="none" stroke="#5f98d6" stroke-width="1.25"/></svg>
<div class="t" style="left:884px;top:196.8px;"><span class="f" style="transform:scaleX(0.835);">OF</span></div>
<div class="inp" style="left:918px;top:195px;width:71px;height:15px;"><span class="it" style="left:4px;"><span class="f" style="transform:scaleX(0.899);">2</span></span></div>
<div class="t" style="left:708px;top:215.8px;"><span class="f" style="transform:scaleX(0.816);">NAME</span></div>
<div class="inp" style="left:776px;top:213px;width:213px;height:15px;"><span class="it" style="left:3px;"><span class="f" style=""></span></span></div>
<div class="t" style="left:708px;top:233.8px;"><span class="f" style="transform:scaleX(0.804);">TYPE</span></div>
<div class="inp" style="left:776px;top:232px;width:92px;height:15px;"><span class="it" style="left:3px;"><span class="f" style="transform:scaleX(0.993);">Turning point</span></span><svg class="chev" width="7" height="4" viewBox="0 0 7 4"><path d="M0.6 0.5 L3.5 3.3 L6.4 0.5" fill="none" stroke="#8fa1b5" stroke-width="0.9"/></svg></div>
<div class="t" style="left:708px;top:253.8px;"><span class="f" style="transform:scaleX(0.840);">ALTITUDE</span></div>
<div class="inp" style="left:776px;top:251px;width:62px;height:15px;"><svg class="spin" width="14" height="7" viewBox="0 0 14 7"><path d="M3.6 0.8 L0.7 3.5 L3.6 6.2 M9.6 0.8 L12.5 3.5 L9.6 6.2" fill="none" stroke="#7d8da0" stroke-width="0.9"/></svg><span class="it" style="left:22px"><span class="f" style="transform:scaleX(0.971);">2000</span></span></div>
<div class="t" style="left:844px;top:251.8px;"><span class="f" style="transform:scaleX(1.043);">feet</span></div>
<div class="inp" style="left:911px;top:251px;width:76px;height:15px;"><span class="it" style="left:3.4000000000000004px;"><span class="f" style="transform:scaleX(0.988);">MSL (Barome</span></span><svg class="chev" width="7" height="4" viewBox="0 0 7 4"><path d="M0.6 0.5 L3.5 3.3 L6.4 0.5" fill="none" stroke="#8fa1b5" stroke-width="0.9"/></svg></div>
<div class="t" style="left:708px;top:273.8px;"><span class="f" style="transform:scaleX(0.826);">SPEED</span></div>
<div class="inp" style="left:776px;top:271px;width:62px;height:15px;"><svg class="spin" width="14" height="7" viewBox="0 0 14 7"><path d="M3.6 0.8 L0.7 3.5 L3.6 6.2 M9.6 0.8 L12.5 3.5 L9.6 6.2" fill="none" stroke="#7d8da0" stroke-width="0.9"/></svg><span class="it" style="left:22px"><span class="f" style="transform:scaleX(0.983);">430</span></span></div>
<div class="t" style="left:845.4px;top:272.8px;"><span class="f" style="transform:scaleX(0.908);">kts</span></div>
<div class="t" style="left:914.4px;top:272.8px;"><span class="f" style="transform:scaleX(0.775);">GS</span></div>
<div class="cb" style="left:975px;top:271px;width:14px;height:14px;"><svg class="ck" width="10" height="8" viewBox="0 0 10 8"><path d="M1.4 4 L3.8 6.4 L8.6 1.4" fill="none" stroke="#f2f4f6" stroke-width="1.6"/></svg></div>
<div class="t" style="left:708px;top:290.8px;"><span class="f" style="transform:scaleX(0.835);">MACH</span></div>
<div class="inp" style="left:776px;top:289px;width:62px;height:15px;"><svg class="spin" width="14" height="7" viewBox="0 0 14 7"><path d="M3.6 0.8 L0.7 3.5 L3.6 6.2 M9.6 0.8 L12.5 3.5 L9.6 6.2" fill="none" stroke="#7d8da0" stroke-width="0.9"/></svg><span class="it" style="left:22px"><span class="f" style="transform:scaleX(0.959);">0.649</span></span></div>
<div class="t" style="left:708px;top:314.8px;"><span class="f" style="transform:scaleX(0.876);">ETA</span></div>
<div class="inp" style="left:776px;top:312px;width:23px;height:15px;"><span class="it" style="left:3.4000000000000004px;"><span class="f" style="transform:scaleX(0.827);">8</span></span></div>
<div class="t dim" style="left:802px;top:313.8px;"><span class="f" style="">:</span></div>
<div class="inp" style="left:808px;top:312px;width:24px;height:15px;"><span class="it" style="left:4px;"><span class="f" style="transform:scaleX(0.899);">0</span></span></div>
<div class="t dim" style="left:835px;top:313.8px;"><span class="f" style="">:</span></div>
<div class="inp" style="left:841px;top:312px;width:24px;height:15px;"><span class="it" style="left:4px;"><span class="f" style="transform:scaleX(0.935);">33</span></span></div>
<div class="t dim" style="left:867px;top:313.8px;"><span class="f" style="">/</span></div>
<div class="inp" style="left:874px;top:312px;width:23px;height:15px;"><span class="it" style="left:3.5999999999999996px;"><span class="f" style="transform:scaleX(0.899);">0</span></span></div>
<div class="t" style="left:911.4px;top:313.8px;"><span class="f" style="transform:scaleX(0.931);">Fix time</span></div>
<div class="cb" style="left:975px;top:312px;width:14px;height:15px;"></div>
<div class="btn" style="left:775px;top:331px;width:70px;height:15px;line-height:15px;"><span class="f" style="transform:scaleX(0.923);">ADD</span></div>
<div class="fbtn" style="left:847px;top:331px;width:70px;height:15px;line-height:13px;line-height:15px;"><span class="f" style="transform:scaleX(0.887);">EDIT</span></div>
<div class="btn" style="left:919px;top:331px;width:70px;height:15px;line-height:15px;"><span class="f" style="transform:scaleX(0.870);">DEL</span></div>
<div class="fbtn" style="left:775px;top:349px;width:214px;height:15px;line-height:13px;line-height:15px;"><span class="f" style="transform:scaleX(0.944);">ADVANCED (WAYPOINT ACTIONS)</span></div>
<div class="dark" style="left:708px;top:372px;width:281px;height:79px;border:1px solid #374b62;"></div>
<div class="sel" style="left:709px;top:373px;width:279px;height:14px;"></div>
<div class="t" style="left:712px;top:373.8px;font-size:9px;color:#a3abb4;"><span class="f" style="transform:scaleX(0.965);">1. Aerobatics(H = Hwpt = 2000 feet)</span></div>
<div class="btn" style="left:712px;top:454px;width:43px;height:15px;line-height:15px;"><span class="f" style="transform:scaleX(0.923);">ADD</span></div>
<div class="btn" style="left:758px;top:454px;width:43px;height:15px;line-height:15px;"><span class="f" style="transform:scaleX(0.960);">INS</span></div>
<div class="fbtn" style="left:804px;top:454px;width:43px;height:15px;line-height:13px;color:#a9c6e6;background:#2a3a4d;line-height:15px;"><span class="f" style="transform:scaleX(0.922);">EDIT</span></div>
<div class="btn" style="left:850px;top:454px;width:43px;height:15px;line-height:15px;"><span class="f" style="transform:scaleX(0.860);">DEL</span></div>
<div class="btn" style="left:896px;top:454px;width:43px;height:15px;line-height:15px;"><span class="f" style="transform:scaleX(0.920);">UP</span></div>
<div class="btn" style="left:942px;top:454px;width:43px;height:15px;line-height:15px;"><span class="f" style="transform:scaleX(0.947);">DOWN</span></div>
<div class="btn" style="left:712px;top:472px;width:43px;height:15px;line-height:15px;"><span class="f" style="transform:scaleX(0.897);">CLONE</span></div>
<div class="fbtn" style="left:706px;top:593px;width:282px;height:15px;line-height:13px;line-height:15px;"><span class="f" style="transform:scaleX(0.940);">ADVANCED WP AUTO FILL</span></div>
<div class="" style="left:0px;top:612px;width:1000px;height:20px;background:#2b3b4d;border-top:1.5px solid #1f2b3a;"></div>
<div class="t" style="left:-21.5px;top:617.8px;font-size:10px;"><span class="f" style="transform:scaleX(0.900);">SELECT</span></div>
<div class="" style="left:16px;top:616px;width:1px;height:14px;background:#3b4d62;"></div>
<div class="sb" style="left:209px;top:617px;width:25px;height:15px;background:#1f2a38;border:1px solid #364a60;color:#c9ced4;border-radius:1.5px;"><span class="f" style="transform:scaleX(0.944);">MAP</span></div>
<div class="sb" style="left:241px;top:617px;width:26px;height:15px;background:#1f2a38;border:1px solid #364a60;color:#c9ced4;border-radius:1.5px;"><span class="f" style="transform:scaleX(0.924);">SAT</span></div>
<div class="sb" style="left:274px;top:617px;width:25px;height:15px;background:radial-gradient(ellipse at 50% 45%,#74b6f4,#3f86d4 75%);border:1px solid #3b77bb;color:#06090d;text-shadow:0 0 2px #cfe6ff;border-radius:1.5px;"><span class="f" style="transform:scaleX(0.909);">ALT</span></div>
<div class="" style="left:325px;top:617px;width:26px;height:15px;background:#1f2a38;border:1px solid #364a60;border-radius:1.5px;"></div>
<div class="" style="left:358px;top:617px;width:25px;height:15px;background:#1f2a38;border:1px solid #364a60;border-radius:1.5px;"></div>
<div class="t" style="left:898.6px;top:617.8px;color:#a7afb8;"><span class="f" style="transform:scaleX(1.011);">26.05.2023 11:17:50</span></div>
<svg style="position:absolute;left:326px;top:617px" width="58" height="15" viewBox="326 617 58 15">
<rect x="330.6" y="619.4" width="12" height="8.6" fill="#9da3aa"/>
<rect x="330.2" y="619.2" width="12.8" height="1.5" fill="#d3d7db"/><rect x="330.2" y="626.7" width="12.8" height="1.5" fill="#d3d7db"/>
<ellipse cx="337.1" cy="623.9" rx="3.6" ry="2.3" fill="#e3e6e9"/><ellipse cx="336.6" cy="623.9" rx="1" ry="0.8" fill="#8e949b"/>
<rect x="342.6" y="623.2" width="5.6" height="1.4" fill="#a4aab1"/>
<g fill="none" stroke="#b3bac2" stroke-width="1.1">
<circle cx="370.7" cy="623.9" r="5.1"/>
<path d="M367 619.6 L367.8 617.8 H373.6 L374.4 619.6 M367 628.2 L367.8 630 H373.6 L374.4 628.2"/>
</g>
<path d="M376.2 622.6 L377.8 623.9 L376.2 625.2 Z" fill="#b3bac2"/>
<path d="M370.7 620.6 V624.6" stroke="#b3bac2" stroke-width="1.3"/>
<path d="M368 622.4 V624 M373.4 622.4 V624 M369.4 626.6 H370 M371.4 626.6 H372" stroke="#8f98a3" stroke-width="0.8"/>
</svg>
</div>
</body></html>
